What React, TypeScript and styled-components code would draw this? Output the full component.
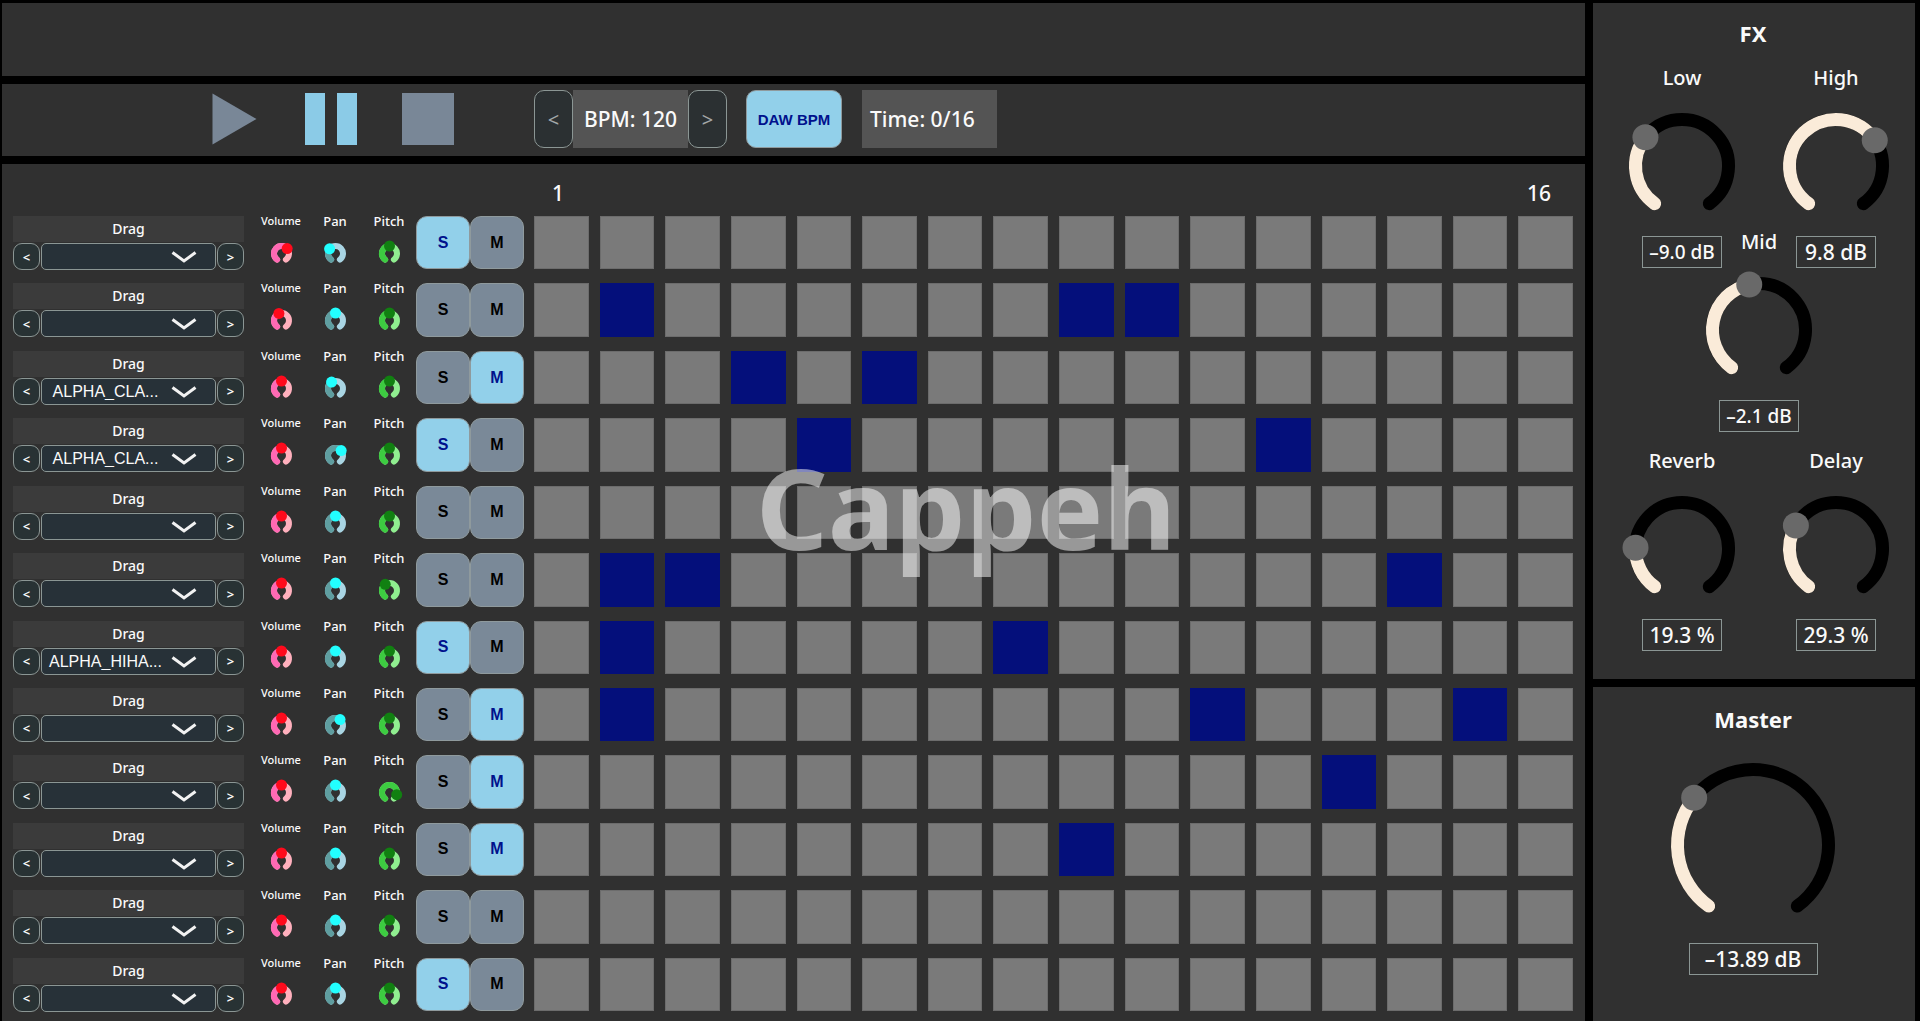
import React, { useState } from "react";
import styled, { createGlobalStyle, css } from "styled-components";

const color = {
  panel: "#303030",
  strip: "#3b3b3b",
  readout: "#545454",
  field: "#273138",
  key: "#2b3032",
  outline: "#8b9694",
  cell: "#7a7a7a",
  cellEdge: "#6c6c6c",
  cellOn: "#040f7b",
  idle: "#7a8998",
  active: "#92d0ea",
  activeText: "#00118c",
  text: "#fafafa",
};

const sans = `"Noto Sans", "Open Sans", sans-serif`;
const arial = `"Liberation Sans", Arial, sans-serif`;

const GlobalStyle = createGlobalStyle`
  *, *::before, *::after { box-sizing: border-box; }
  body {
    margin: 0;
    background: #000;
    color: ${color.text};
    font-family: ${sans};
  }
  button, select, input { font: inherit; margin: 0; }
`;

/* ---------- page frame ---------- */

const Page = styled.div`
  position: relative;
  min-height: 100vh;
  padding: 3px 5px 0 2px;
  display: grid;
  grid-template-columns: minmax(0, 1fr) 322px;
  gap: 8px;
`;

const Column = styled.div`
  display: flex;
  flex-direction: column;
  gap: 8px;
`;

const Panel = styled.section`
  background: ${color.panel};
`;

const TopBar = styled(Panel)`
  height: 73px;
`;

const Transport = styled(Panel)`
  height: 72px;
  padding: 6px 12px 8px 210px;
  display: flex;
  align-items: stretch;
`;

const Watermark = styled.div`
  position: absolute;
  inset: 0;
  padding: 0 0 8px 12px;
  display: flex;
  align-items: center;
  justify-content: center;
  font-size: 112px;
  font-weight: 700;
  color: rgba(255, 255, 255, 0.5);
  pointer-events: none;
`;

/* ---------- transport ---------- */

const IconGroup = styled.div`
  width: 322px;
  display: flex;
  align-items: center;
  gap: 45px;
`;

const IconButton = styled.button<{ $on: boolean }>`
  padding: 0;
  border: 0;
  background: none;
  color: ${(p) => (p.$on ? "#8bcbe7" : "#798797")};
  cursor: pointer;
  svg {
    display: block;
  }
`;

const TempoKey = styled.button`
  width: 39px;
  border: 1px solid ${color.outline};
  border-radius: 10px;
  padding: 0;
  background: ${color.key};
  color: #a3a7a8;
  font-size: 20px;
  cursor: pointer;
`;

const Readout = styled.output<{ $width: number }>`
  width: ${(p) => p.$width}px;
  display: flex;
  align-items: center;
  padding-left: ${(p) => (p.$width > 120 ? 8 : 11)}px;
  background: ${color.readout};
  font-size: 21px;
  font-weight: 500;
  white-space: nowrap;
`;

const toggle = css<{ $on: boolean }>`
  border: 1px solid #8f9a9d;
  padding: 0;
  background: ${(p) => (p.$on ? color.active : color.idle)};
  color: ${(p) => (p.$on ? color.activeText : "#000")};
  font-family: ${arial};
  font-weight: 700;
  cursor: pointer;
`;

const SyncButton = styled.button<{ $on: boolean }>`
  ${toggle}
  width: 96px;
  margin: 0 20px 0 19px;
  border-radius: 10px;
  font-size: 15px;
`;

/* ---------- sequencer ---------- */

const Sequencer = styled(Panel)`
  flex: 1;
  padding: 14px 12px 10px 11px;
  display: flex;
  flex-direction: column;
  gap: 8px;
`;

const BeatNumbers = styled.div`
  margin-left: 521px;
  padding: 0 22px 0 18px;
  display: flex;
  justify-content: space-between;
  font-size: 21px;
  font-weight: 500;
  line-height: 30px;
`;

const Tracks = styled.div`
  flex: 1;
  display: grid;
  grid-template-rows: repeat(12, minmax(53px, 1fr));
  gap: 14px;
`;

const Track = styled.div`
  min-height: 0;
  display: grid;
  grid-template-columns: 241px 162px 118px minmax(0, 1fr);
`;

const Sample = styled.div`
  width: 231px;
  height: 53px;
`;

const DragStrip = styled.div`
  margin-bottom: 1px;
  background: ${color.strip};
  font-size: 14px;
  font-weight: 500;
  line-height: 26px;
  text-align: center;
  cursor: grab;
`;

const Picker = styled.div`
  height: 27px;
  display: grid;
  grid-template-columns: 27px 1fr 27px;
  gap: 1px;
`;

const SmallKey = styled.button`
  border: 1px solid ${color.outline};
  border-radius: 9px;
  padding: 0;
  background: #283234;
  color: ${color.text};
  font-size: 13px;
  font-weight: 600;
  cursor: pointer;
`;

const SelectBox = styled.div`
  position: relative;
  display: grid;
  svg {
    position: absolute;
    top: 8px;
    right: 19px;
    pointer-events: none;
  }
`;

const SampleSelect = styled.select`
  appearance: none;
  width: 100%;
  border: 1px solid ${color.outline};
  border-radius: 5px;
  padding: 0 46px 0 0;
  background: ${color.field};
  color: ${color.text};
  font-family: ${arial};
  font-size: 16px;
  text-align: center;
  text-align-last: center;
`;

const MiniKnobs = styled.div`
  display: grid;
  grid-template-columns: repeat(3, 54px);
`;

const MiniLabel = styled.span<{ $small: boolean }>`
  font-size: ${(p) => (p.$small ? 11 : 13)}px;
  font-weight: 500;
  line-height: 10px;
`;

const KnobLabel = styled.label<{ $gap: number }>`
  display: flex;
  flex-direction: column;
  align-items: center;
  gap: ${(p) => p.$gap}px;
`;

const Dial = styled.span`
  position: relative;
  display: block;
  svg {
    display: block;
    overflow: visible;
  }
`;

const DialInput = styled.input`
  position: absolute;
  inset: 0;
  width: 100%;
  height: 100%;
  opacity: 0;
  cursor: pointer;
`;

const SoloMute = styled.div`
  display: grid;
  grid-template-columns: 54px 54px;
`;

const SoloMuteButton = styled.button<{ $on: boolean }>`
  ${toggle}
  border-radius: 11px;
  font-size: 16px;
`;

const Steps = styled.div`
  display: grid;
  grid-template-columns: repeat(16, minmax(0, 1fr));
  gap: 11px;
`;

const Step = styled.button<{ $on: boolean }>`
  border: 1px solid ${(p) => (p.$on ? color.cellOn : color.cellEdge)};
  padding: 0;
  background: ${(p) => (p.$on ? color.cellOn : color.cell)};
  cursor: pointer;
`;

/* ---------- effects and master ---------- */

const FxPanel = styled(Panel)`
  padding: 15px 2px 28px 0;
`;

const MasterPanel = styled(Panel)`
  flex: 1;
  padding: 17px 2px 28px 0;
`;

const Title = styled.h2<{ $gap: number }>`
  margin: 0 0 ${(p) => p.$gap}px;
  font-size: 22px;
  line-height: 30px;
  font-weight: 700;
  text-align: center;
`;

const KnobRow = styled.div`
  padding-left: 12px;
  display: grid;
  grid-auto-flow: column;
  grid-auto-columns: 154px;
  justify-content: center;
`;

const MidRow = styled(KnobRow)`
  margin: -40px 0 15px;
`;

const KnobCell = styled.div<{ $gap: number }>`
  display: flex;
  flex-direction: column;
  align-items: center;
  gap: ${(p) => p.$gap}px;
`;

const KnobName = styled.span`
  font-size: 20px;
  font-weight: 500;
  line-height: 28px;
`;

const ValueBox = styled.output<{ $width: number; $small?: boolean }>`
  width: ${(p) => p.$width}px;
  border: 1px solid ${color.outline};
  font-size: ${(p) => (p.$small ? 19 : 21)}px;
  font-weight: 500;
  line-height: 30px;
  text-align: center;
  white-space: nowrap;
`;

/* ---------- rotary drawing ---------- */

const SWEEP = 144;

function point(c: number, r: number, deg: number) {
  const a = (deg * Math.PI) / 180;
  return { x: c + r * Math.sin(a), y: c - r * Math.cos(a) };
}

function arc(c: number, r: number, from: number, to: number) {
  const a = point(c, r, from);
  const b = point(c, r, to);
  return `M${a.x} ${a.y}A${r} ${r} 0 ${to - from > 180 ? 1 : 0} 1 ${b.x} ${b.y}`;
}

type RotaryProps = {
  size: number;
  stroke: number;
  thumb: number;
  fraction: number;
  fill: string;
  track: string;
  knob: string;
};

function Rotary({ size, stroke, thumb, fraction, fill, track, knob }: RotaryProps) {
  const c = size / 2;
  const r = c - stroke / 2;
  const angle = -SWEEP + fraction * 2 * SWEEP;
  const t = point(c, r, angle);
  return (
    <svg width={size} height={size} fill="none" strokeWidth={stroke} strokeLinecap="round" aria-hidden="true">
      <path d={arc(c, r, -SWEEP, SWEEP)} stroke={track} />
      <path d={arc(c, r, -SWEEP, angle)} stroke={fill} />
      <circle cx={t.x} cy={t.y} r={thumb / 2} fill={knob} />
    </svg>
  );
}

const miniColors = {
  Volume: { fill: "#ff69b4", track: "#ffb0bd", knob: "#ff0a1c" },
  Pan: { fill: "#5f9ea0", track: "#a9d5e3", knob: "#22ffff" },
  Pitch: { fill: "#3dcb41", track: "#90ee90", knob: "#118011" },
};

function MiniKnob({ name, initial }: { name: keyof typeof miniColors; initial: number }) {
  const [value, setValue] = useState(initial);
  return (
    <KnobLabel $gap={17}>
      <MiniLabel $small={name === "Volume"}>{name}</MiniLabel>
      <Dial>
        <Rotary size={21} stroke={6} thumb={11} fraction={value / 100} {...miniColors[name]} />
        <DialInput type="range" min={0} max={100} value={value} onChange={(e) => setValue(+e.target.value)} />
      </Dial>
    </KnobLabel>
  );
}

type BigKnobProps = {
  name: string;
  initial: number;
  min: number;
  max: number;
  unit: string;
  size?: number;
  digits?: number;
  titled?: boolean;
};

function BigKnob({ name, initial, min, max, unit, size = 106, digits = 1, titled }: BigKnobProps) {
  const [value, setValue] = useState(initial);
  const text = `${value < 0 ? "–" : ""}${Math.abs(value).toFixed(digits)} ${unit}`;
  return (
    <KnobCell $gap={titled ? 16 : 17}>
      <KnobLabel $gap={21}>
        {!titled && <KnobName>{name}</KnobName>}
        <Dial>
          <Rotary
            size={size}
            stroke={13}
            thumb={26}
            fraction={(value - min) / (max - min)}
            fill="#faebd9"
            track="#000"
            knob="#696969"
          />
          <DialInput
            type="range"
            aria-label={name}
            min={min}
            max={max}
            step={10 ** -digits}
            value={value}
            onChange={(e) => setValue(+e.target.value)}
          />
        </Dial>
      </KnobLabel>
      <ValueBox $width={titled ? 129 : 80} $small={!titled && value < 0}>
        {text}
      </ValueBox>
    </KnobCell>
  );
}

/* ---------- tracks ---------- */

type TrackData = {
  sample?: string;
  volume?: number;
  pan?: number;
  pitch?: number;
  solo?: boolean;
  mute?: boolean;
  steps?: number[];
};

const tracks: TrackData[] = [
  { volume: 67, pan: 32, solo: true },
  { volume: 43, steps: [2, 9, 10] },
  { sample: "ALPHA_CLA...", pan: 39, mute: true, steps: [4, 6] },
  { sample: "ALPHA_CLA...", pan: 67, solo: true, steps: [5, 12] },
  {},
  { pitch: 38, steps: [2, 3, 14] },
  { sample: "ALPHA_HIHA...", solo: true, steps: [2, 8] },
  { pan: 63, mute: true, steps: [2, 11, 15] },
  { pitch: 87, mute: true, steps: [13] },
  { mute: true, steps: [9] },
  {},
  { solo: true },
];

const stepNumbers = Array.from({ length: 16 }, (_, i) => i + 1);

function TrackRow({ data, index }: { data: TrackData; index: number }) {
  const [solo, setSolo] = useState(!!data.solo);
  const [mute, setMute] = useState(!!data.mute);
  const [steps, setSteps] = useState(data.steps ?? []);
  const flip = (n: number) => setSteps(steps.includes(n) ? steps.filter((s) => s !== n) : [...steps, n]);

  return (
    <Track>
      <Sample>
        <DragStrip>Drag</DragStrip>
        <Picker>
          <SmallKey aria-label="Previous sample">&lt;</SmallKey>
          <SelectBox>
            <SampleSelect aria-label={`Sample ${index + 1}`}>
              <option>{data.sample ?? ""}</option>
            </SampleSelect>
            <svg width="26" height="12" fill="none" stroke="#f2f2f2" strokeWidth="3" aria-hidden="true">
              <path d="M1.5 1.5L13 10L24.5 1.5" />
            </svg>
          </SelectBox>
          <SmallKey aria-label="Next sample">&gt;</SmallKey>
        </Picker>
      </Sample>
      <MiniKnobs>
        <MiniKnob name="Volume" initial={data.volume ?? 50} />
        <MiniKnob name="Pan" initial={data.pan ?? 50} />
        <MiniKnob name="Pitch" initial={data.pitch ?? 50} />
      </MiniKnobs>
      <SoloMute>
        <SoloMuteButton $on={solo} aria-pressed={solo} onClick={() => setSolo(!solo)}>
          S
        </SoloMuteButton>
        <SoloMuteButton $on={mute} aria-pressed={mute} onClick={() => setMute(!mute)}>
          M
        </SoloMuteButton>
      </SoloMute>
      <Steps>
        {stepNumbers.map((n) => (
          <Step
            key={n}
            $on={steps.includes(n)}
            aria-pressed={steps.includes(n)}
            aria-label={`Step ${n}`}
            onClick={() => flip(n)}
          />
        ))}
      </Steps>
    </Track>
  );
}

export default function App() {
  const [mode, setMode] = useState("pause");
  const [bpm, setBpm] = useState(120);
  const [sync, setSync] = useState(true);

  return (
    <>
      <GlobalStyle />
      <Page>
        <Column>
          <TopBar />
          <Transport>
            <IconGroup>
              <IconButton $on={mode === "play"} aria-label="Play" onClick={() => setMode("play")}>
                <svg width="48" height="52" fill="currentColor">
                  <path d="M0.5 0.5L44.5 26L0.5 51.5Z" />
                </svg>
              </IconButton>
              <IconButton $on={mode === "pause"} aria-label="Pause" onClick={() => setMode("pause")}>
                <svg width="52" height="52" fill="currentColor">
                  <path d="M0 0H20V52H0ZM32 0H52V52H32Z" />
                </svg>
              </IconButton>
              <IconButton $on={mode === "stop"} aria-label="Stop" onClick={() => setMode("stop")}>
                <svg width="52" height="52" fill="currentColor">
                  <path d="M0 0H52V52H0Z" />
                </svg>
              </IconButton>
            </IconGroup>
            <TempoKey aria-label="Slower" onClick={() => setBpm(bpm - 1)}>
              &lt;
            </TempoKey>
            <Readout $width={115}>BPM: {bpm}</Readout>
            <TempoKey aria-label="Faster" onClick={() => setBpm(bpm + 1)}>
              &gt;
            </TempoKey>
            <SyncButton $on={sync} aria-pressed={sync} onClick={() => setSync(!sync)}>
              DAW BPM
            </SyncButton>
            <Readout $width={135}>Time: 0/16</Readout>
          </Transport>
          <Sequencer>
            <BeatNumbers>
              <span>1</span>
              <span>16</span>
            </BeatNumbers>
            <Tracks>
              {tracks.map((t, i) => (
                <TrackRow key={i} data={t} index={i} />
              ))}
            </Tracks>
          </Sequencer>
        </Column>
        <Column>
          <FxPanel>
            <Title $gap={16}>FX</Title>
            <KnobRow>
              <BigKnob name="Low" initial={-9} min={-25} max={25} unit="dB" />
              <BigKnob name="High" initial={9.8} min={-25} max={25} unit="dB" />
            </KnobRow>
            <MidRow>
              <BigKnob name="Mid" initial={-2.1} min={-25} max={25} unit="dB" />
            </MidRow>
            <KnobRow>
              <BigKnob name="Reverb" initial={19.3} min={0} max={100} unit="%" />
              <BigKnob name="Delay" initial={29.3} min={0} max={100} unit="%" />
            </KnobRow>
          </FxPanel>
          <MasterPanel>
            <Title $gap={29}>Master</Title>
            <BigKnob name="Master" initial={-13.89} min={-30} max={20} unit="dB" size={164} digits={2} titled />
          </MasterPanel>
        </Column>
        <Watermark>Cappeh</Watermark>
      </Page>
    </>
  );
}
